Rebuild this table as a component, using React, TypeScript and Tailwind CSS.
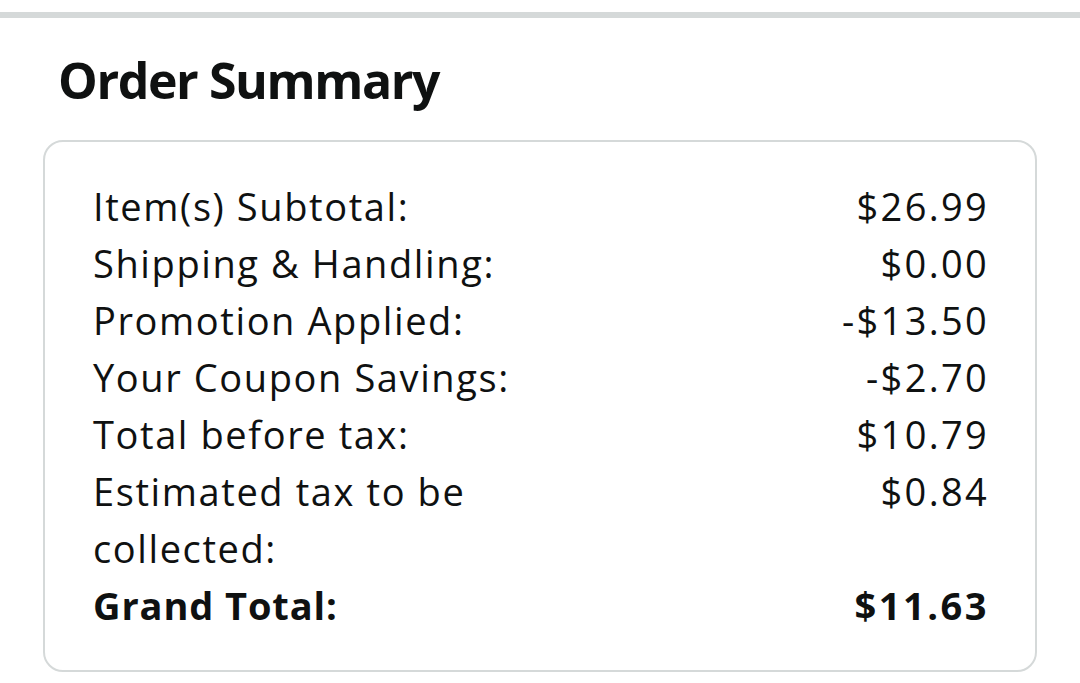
import React from "react";

const rows: [string, string][] = [
  ["Item(s) Subtotal:", "$26.99"],
  ["Shipping & Handling:", "$0.00"],
  ["Promotion Applied:", "-$13.50"],
  ["Your Coupon Savings:", "-$2.70"],
  ["Total before tax:", "$10.79"],
  ["Estimated tax to be collected:", "$0.84"],
];

export default function App() {
  return (
    <div
      className="w-[1080px] h-[683px] bg-white overflow-hidden text-[#0f1111]"
      style={{ fontFamily: "'Open Sans', 'Noto Sans', sans-serif" }}
    >
      <div className="h-[12px]" />
      <div className="h-[6px] bg-[#d5d9d9]" />
      <div className="pl-[58px] pt-[32px] pb-[30px]">
        <h1 className="text-[50px] leading-[60px] font-bold tracking-[-1.4px]">Order Summary</h1>
      </div>
      <div className="mx-[43px] rounded-[20px] border-2 border-[#d5d9d9] px-[48px] pt-[36px] pb-[36px]">
        {rows.map(([l, r]) => (
          <div key={l} className="flex justify-between text-[38px] leading-[57px]">
            <span className="w-[420px] tracking-[1.6px]">{l}</span>
            <span className="tracking-[2.3px] -mr-[2px]">{r}</span>
          </div>
        ))}
        <div className="flex justify-between text-[38px] leading-[57px] font-bold">
          <span className="tracking-[0.9px]">Grand Total:</span>
          <span className="tracking-[2.5px] -mr-[2px]">$11.63</span>
        </div>
      </div>
    </div>
  );
}
